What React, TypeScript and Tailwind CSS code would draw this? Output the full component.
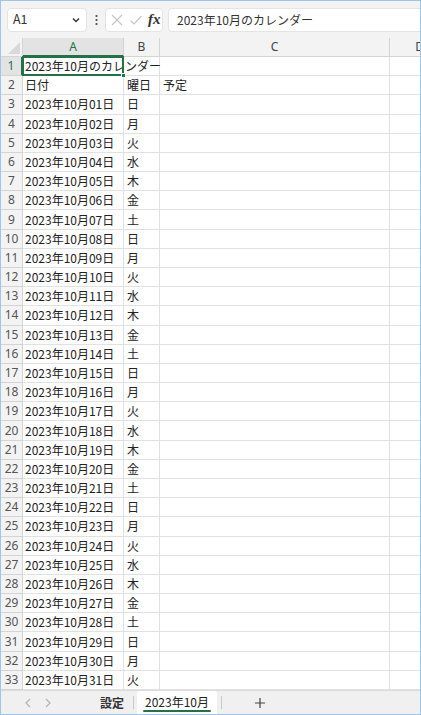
import React from "react";

const days = ["日", "月", "火", "水", "木", "金", "土"];
const FONT = { fontFamily: '"Noto Sans CJK JP", "Noto Sans", sans-serif' } as const;

export default function App() {
  const rows: { a: string; b: string; c: string }[] = [];
  rows.push({ a: "2023年10月のカレンダー", b: "", c: "" });
  rows.push({ a: "日付", b: "曜日", c: "予定" });
  for (let d = 1; d <= 31; d++) {
    rows.push({
      a: `2023年10月${String(d).padStart(2, "0")}日`,
      b: days[(d - 1) % 7],
      c: "",
    });
  }

  return (
    <div
      className="w-[421px] h-[715px] border border-[#9fc5e8] bg-white flex flex-col overflow-hidden text-[#222]"
      style={FONT}
    >
      {/* toolbar */}
      <div className="h-[37px] bg-[#f3f3f3] flex items-center pl-[6px] shrink-0">
        <div className="w-[80px] h-[24px] bg-white rounded-[4px] border border-[#e4e4e4] flex items-center justify-between pl-[5px] pr-[5px] text-[12.5px] text-[#333]">
          <span>A1</span>
          <svg width="10" height="10" viewBox="0 0 10 10">
            <path d="M2 3.5 L5 6.5 L8 3.5" fill="none" stroke="#333" strokeWidth="1.4" />
          </svg>
        </div>
        <div className="w-[18px] flex justify-center">
          <svg width="3" height="12" viewBox="0 0 3 12">
            <circle cx="1.5" cy="2" r="1.1" fill="#444" />
            <circle cx="1.5" cy="6" r="1.1" fill="#444" />
            <circle cx="1.5" cy="10" r="1.1" fill="#444" />
          </svg>
        </div>
        <div className="w-[58px] h-[24px] bg-white rounded-[4px] border border-[#e4e4e4] flex items-center pl-[4px] gap-[5px]">
          <svg width="14" height="14" viewBox="0 0 14 14">
            <path d="M2 2 L12 12 M12 2 L2 12" stroke="#c4c4c4" strokeWidth="1.1" fill="none" />
          </svg>
          <svg width="14" height="14" viewBox="0 0 14 14">
            <path d="M1.5 7.5 L5 11 L12.5 3" stroke="#c4c4c4" strokeWidth="1.1" fill="none" />
          </svg>
          <span
            className="text-[15px] italic font-semibold text-[#333] leading-none"
            style={{ fontFamily: '"Liberation Serif", "DejaVu Serif", serif' }}
          >
            fx
          </span>
        </div>
        <div className="ml-[5px] flex-1 h-[24px] bg-white rounded-l-[4px] border border-r-0 border-[#e4e4e4] flex items-center pl-[8px] text-[12px] text-[#333]">
          2023年10月のカレンダー
        </div>
      </div>

      {/* grid */}
      <div className="shrink-0 grid grid-cols-[22px_101px_36px_230px_1fr] grid-rows-[19px_repeat(33,minmax(0,1fr))] h-[652px] text-[12px]">
        {/* header row */}
        <div className="bg-[#f3f3f3] border-r border-b border-[#d4d4d4] relative">
          <svg className="absolute right-[2px] bottom-[2px]" width="12" height="12" viewBox="0 0 12 12">
            <path d="M12 0 L12 12 L0 12 Z" fill="#d9d9d9" />
          </svg>
        </div>
        <div className="bg-[#e3e3e3] border-r border-[#d4d4d4] border-b-2 border-b-[#217346] flex items-center justify-center text-[#217346]" style={{ fontFamily: '"Noto Sans", sans-serif' }}>A</div>
        <div className="bg-[#f3f3f3] border-r border-b border-[#d4d4d4] flex items-center justify-center text-[#444]" style={{ fontFamily: '"Noto Sans", sans-serif' }}>B</div>
        <div className="bg-[#f3f3f3] border-r border-b border-[#d4d4d4] flex items-center justify-center text-[#444]" style={{ fontFamily: '"Noto Sans", sans-serif' }}>C</div>
        <div className="bg-[#f3f3f3] border-b border-[#d4d4d4] flex items-center justify-end text-[#444] overflow-hidden" style={{ fontFamily: '"Noto Sans", sans-serif' }}><span className="translate-x-[4px]">D</span></div>

        {rows.map((r, i) => {
          const first = i === 0;
          return (
            <React.Fragment key={i}>
              <div
                className={
                  "border-r border-b border-[#d4d4d4] flex items-center justify-center text-[12px] " +
                  (first ? "bg-[#e3e3e3] text-[#217346] border-r-2 border-r-[#217346]" : "bg-[#f3f3f3] text-[#555]")
                }
                style={{ fontFamily: '"Noto Sans", sans-serif' }}
              >
                {i + 1}
              </div>
              <div
                className={
                  "border-b border-[#e1e1e1] flex items-center pl-[2px] whitespace-nowrap relative " +
                  (first ? "z-10" : "border-r overflow-hidden")
                }
              >
                {r.a}
                {first && (
                  <div className="absolute left-[-1px] top-[-1px] w-[102px] h-[20px] border-2 border-[#217346] pointer-events-none">
                    <div className="absolute right-[-4px] bottom-[-4px] w-[5px] h-[5px] bg-[#217346] border border-white" />
                  </div>
                )}
              </div>
              <div className="border-r border-b border-[#e1e1e1] flex items-center pl-[3px] whitespace-nowrap overflow-hidden">
                {r.b}
              </div>
              <div className="border-r border-b border-[#e1e1e1] flex items-center pl-[3px] whitespace-nowrap overflow-hidden">
                {r.c}
              </div>
              <div className="border-b border-[#e1e1e1]" />
            </React.Fragment>
          );
        })}
      </div>

      {/* tab bar */}
      <div className="flex-1 bg-[#f0f0f0] border-t border-[#dcdcdc] flex items-stretch text-[12px]">
        <div className="w-[31px] flex items-center justify-end">
          <svg width="8" height="10" viewBox="0 0 8 10">
            <path d="M6 1 L2 5 L6 9" stroke="#b4b4b4" strokeWidth="1.2" fill="none" />
          </svg>
        </div>
        <div className="w-[32px] flex items-center justify-center">
          <svg width="8" height="10" viewBox="0 0 8 10">
            <path d="M2 1 L6 5 L2 9" stroke="#b4b4b4" strokeWidth="1.2" fill="none" />
          </svg>
        </div>
        <div className="ml-[36px] flex items-center font-semibold text-[#333]">設定</div>
        <div className="ml-[9px] w-px bg-[#c8c8c8] my-[5px]" />
        <div className="ml-[3px] w-[80px] bg-white rounded-t-[3px] flex flex-col items-center justify-center relative text-[#222]">
          <span className="-mt-[2px]">2023年10月</span>
          <div className="absolute left-[6px] right-[6px] bottom-[2px] h-[2px] bg-[#217346] rounded-full" />
        </div>
        <div className="ml-[4px] w-px bg-[#c8c8c8] my-[5px]" />
        <div className="ml-[32px] flex items-center">
          <svg width="12" height="12" viewBox="0 0 12 12">
            <path d="M6 1 V11 M1 6 H11" stroke="#444" strokeWidth="1.2" />
          </svg>
        </div>
      </div>
    </div>
  );
}
